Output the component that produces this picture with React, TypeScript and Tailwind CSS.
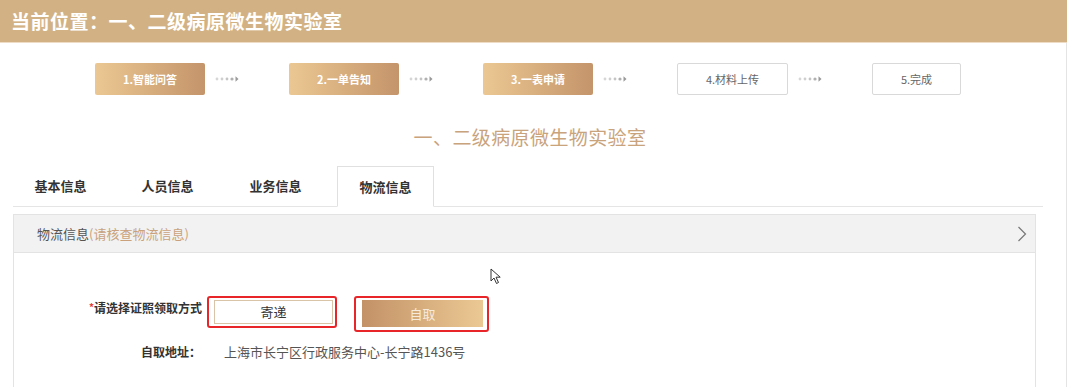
const steps = [
  { label: "1.智能问答", done: true },
  { label: "2.一单告知", done: true },
  { label: "3.一表申请", done: true },
  { label: "4.材料上传", done: false },
  { label: "5.完成", done: false },
];

function StepArrow() {
  return (
    <svg width="24" height="8" viewBox="0 0 24 8">
      <circle cx="2" cy="4" r="1.4" fill="#d6d6d6" />
      <circle cx="7" cy="4" r="1.4" fill="#cfcfcf" />
      <circle cx="12" cy="4" r="1.4" fill="#c4c4c4" />
      <circle cx="17" cy="4" r="1.6" fill="#b0b0b0" />
      <path d="M20.5 1.2 L23.5 4 L20.5 6.8 Z" fill="#999" />
    </svg>
  );
}

function Cursor() {
  return (
    <svg width="12" height="17" viewBox="0 0 12 17" className="absolute left-[490px] top-[268px]">
      <path d="M1 1 L1 13 L4 10 L6.5 15.5 L8.5 14.5 L6 9.2 L10.2 9.2 Z" fill="#fff" stroke="#333" strokeWidth="1" strokeLinejoin="round" />
    </svg>
  );
}

export default function App() {
  return (
    <div className="relative w-[1068px] h-[387px] overflow-hidden bg-white font-['Noto_Sans_CJK_SC','Noto_Sans',sans-serif]">
      <div className="h-[43px] w-[1067px] bg-[#d2b284] border-b border-[#efdcc6] flex items-center pl-[11px]">
        <span className="text-white text-[19px] font-bold tracking-[0.5px]">当前位置：一、二级病原微生物实验室</span>
      </div>

      <div className="w-[1067px] h-[344px] border-r border-[#e4e4e4]">
        <div className="flex items-center pl-[95px] pt-[20px]">
          {steps.map((s, i) => (
            <div key={s.label} className="flex items-center">
              <div
                className={
                  s.done
                    ? "w-[110px] h-[32px] rounded-[2px] bg-gradient-to-r from-[#ebc893] to-[#c4946a] flex items-center justify-center text-white text-[11px] font-bold"
                    : `${i === 4 ? "w-[89px]" : "w-[111px]"} h-[32px] rounded-[2px] border border-[#d9d9d9] bg-white flex items-center justify-center text-[#666] text-[11px]`
                }
              >
                {s.label}
              </div>
              {i < steps.length - 1 && (
                <div className="w-[84px] pl-[10px] flex items-center">
                  <StepArrow />
                </div>
              )}
            </div>
          ))}
        </div>

        <div className="text-center pr-[6px] mt-[27px] text-[19px] text-[#c9a37c] leading-[30px] tracking-[0.4px]">
          一、二级病原微生物实验室
        </div>

        <div className="ml-[13px] w-[1030px] mt-[14px] h-[41px] border-b border-[#e5e5e5] flex items-end text-[13px] font-bold text-[#333]">
          <div className="w-[95px] h-[40px] flex items-center justify-center">基本信息</div>
          <div className="w-[119px] h-[40px] flex items-center justify-center">人员信息</div>
          <div className="w-[97px] h-[40px] flex items-center justify-center">业务信息</div>
          <div className="ml-[13px] w-[97px] h-[41px] -mb-px border border-b-white border-[#e0e0e0] bg-white flex items-center justify-center">物流信息</div>
        </div>

        <div className="ml-[13px] mt-[7px] w-[1023px] h-[200px] border border-b-0 border-[#e3e3e3]">
          <div className="h-[38px] bg-[#f2f2f2] border-b border-[#e3e3e3] flex items-center justify-between pl-[23px] pr-[8px] text-[13px]">
            <div>
              <span className="text-[#555]">物流信息</span>
              <span className="text-[#c9a27d]">(请核查物流信息)</span>
            </div>
            <svg width="10" height="16" viewBox="0 0 10 16">
              <path d="M1.5 1 L8.5 8 L1.5 15" fill="none" stroke="#777" strokeWidth="1.2" />
            </svg>
          </div>

          <div className="pt-[43px]">
            <div className="flex items-start">
              <div className="w-[188px] text-right text-[12px] font-bold text-[#333] pt-[3px]">
                <span className="text-[#e53935] text-[10px] align-top">*</span>请选择证照领取方式
              </div>
              <div className="ml-[5px] border-2 border-[#e8262a] rounded-[3px] pl-[5px] pr-[2px] py-[2px]">
                <div className="w-[119px] h-[24px] border border-[#d9c4a7] bg-white flex items-center justify-center text-[13px] text-[#333]">寄递</div>
              </div>
              <div className="ml-[17px] border-2 border-[#e8262a] rounded-[3px] pl-[6px] pr-[4px] pt-[2px] pb-[3px]">
                <div className="w-[121px] h-[27px] bg-gradient-to-r from-[#c39267] to-[#ebc994] flex items-center justify-center text-[13px] text-[#f6eadc]">自取</div>
              </div>
            </div>

            <div className="flex items-center mt-[10px] text-[12px]">
              <div className="w-[187px] text-right font-bold text-[#333]">自取地址：</div>
              <div className="ml-[23px] text-[13px] text-[#555]">上海市长宁区行政服务中心-长宁路1436号</div>
            </div>
          </div>
        </div>
      </div>

      <Cursor />
    </div>
  );
}
